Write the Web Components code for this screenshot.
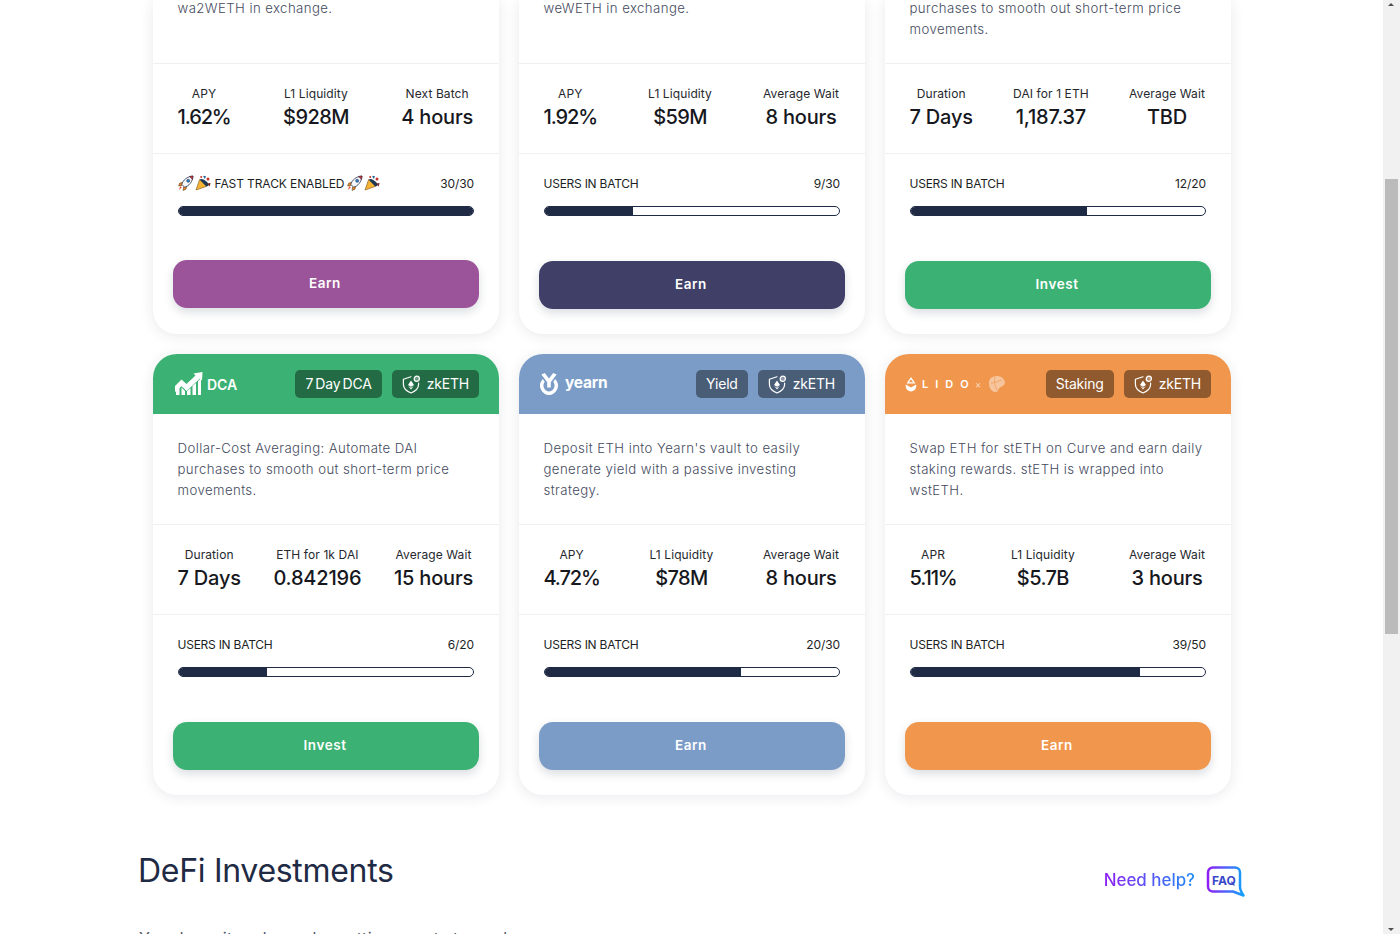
<!DOCTYPE html>
<html lang="en">
<head>
<meta charset="utf-8">
<title>Investments</title>
<style>
  html, body { margin: 0; padding: 0; height: 100%; overflow: hidden; background: #fff; }
  body { font-family: Inter, "Liberation Sans", sans-serif; }
  page-shell { height: 100vh; }
</style>
</head>
<body>
<page-shell>
  <card-grid>
    <invest-card cropped color="#9b5499" label-a="APY" value-a="1.62%" label-b="L1 Liquidity" value-b="$928M" label-c="Next Batch" value-c="4 hours" batch="FAST" count="30/30" percent="100" action="Earn" lift="1">
      wa2WETH in exchange.
    </invest-card>
    <invest-card cropped color="#3f3f67" label-a="APY" value-a="1.92%" label-b="L1 Liquidity" value-b="$59M" label-c="Average Wait" value-c="8 hours" count="9/30" percent="30" action="Earn">
      weWETH in exchange.
    </invest-card>
    <invest-card cropped color="#3bb273" label-a="Duration" value-a="7 Days" label-b="DAI for 1 ETH" value-b="1,187.37" label-c="Average Wait" value-c="TBD" count="12/20" percent="60" action="Invest">
      purchases to smooth out short-term price movements.
    </invest-card>

    <invest-card color="#3bb273" tag="7 Day DCA" label-a="Duration" value-a="7 Days" label-b="ETH for 1k DAI" value-b="0.842196" label-c="Average Wait" value-c="15 hours" count="6/20" percent="30" action="Invest">
      <brand-logo slot="logo" kind="dca"></brand-logo>
      Dollar-Cost Averaging: Automate DAI purchases to smooth out short-term price movements.
    </invest-card>
    <invest-card color="#7b9cc7" tag="Yield" label-a="APY" value-a="4.72%" label-b="L1 Liquidity" value-b="$78M" label-c="Average Wait" value-c="8 hours" count="20/30" percent="66.6" action="Earn">
      <brand-logo slot="logo" kind="yearn"></brand-logo>
      Deposit ETH into Yearn's vault to easily generate yield with a passive investing strategy.
    </invest-card>
    <invest-card color="#f0964d" tag="Staking" label-a="APR" value-a="5.11%" label-b="L1 Liquidity" value-b="$5.7B" label-c="Average Wait" value-c="3 hours" count="39/50" percent="78" action="Earn">
      <brand-logo slot="logo" kind="lido"></brand-logo>
      Swap ETH for stETH on Curve and earn daily staking rewards. stETH is wrapped into<br>wstETH.
    </invest-card>
  </card-grid>
  <section-head title="DeFi Investments"></section-head>
  <section-intro>You deposit and earn by putting assets to work</section-intro>
</page-shell>
<fake-scrollbar></fake-scrollbar>

<script>
// little svg bits that more than one element needs
const SHIELD = `<svg width="19" height="19" viewBox="0 0 19 19" fill="none">
  <path d="M9 1.800 1.400 4.300v5c0 4 3 6.900 7.600 8.700 4.600-1.800 7.600-4.700 7.600-8.700V8" stroke="#fff" stroke-width="1.200" stroke-linejoin="round" stroke-linecap="round"/>
  <path d="M9 5.400 6 10l3 1.700 3-1.700z" fill="#fff"/>
  <path d="M6.300 11.100 9 14.600l2.700-3.500L9 12.700z" fill="#fff"/>
  <circle cx="14.800" cy="3.800" r="2.600" fill="#fff" fill-opacity=".35" stroke="#fff" stroke-width="1.200"/>
</svg>`;

const ROCKET = `<svg width="16" height="16" viewBox="0 0 16 16">
  <path d="M5.200 7.200 1.800 8 .6 11l3.400-.6zM8.800 10.800 8 14.200l-3 1.200.6-3.400z" fill="#f08a24" stroke="#4a2c12" stroke-width=".5"/>
  <path d="M3.800 9.400C5 5 9 1.600 15 1c-.5 6-4 10-8.400 11.200z" fill="#f4f7fb" stroke="#2c3144" stroke-width=".8"/>
  <path d="M11.400 1.500 15 1l-.5 3.600z" fill="#d8262c" stroke="#2c3144" stroke-width=".5"/>
  <circle cx="10.200" cy="5.800" r="1.500" fill="#2d86d9" stroke="#2c3144" stroke-width=".6"/>
  <path d="M3.800 12.200 1 15l1.200-3.800z" fill="#e9452a"/>
</svg>`;

const POPPER = `<svg width="16" height="16" viewBox="0 0 16 16">
  <path d="M1 15 4.600 4.600l6.800 6.800z" fill="#f6b437" stroke="#7c4f10" stroke-width=".6"/>
  <path d="M4.600 4.600 11.400 11.400C14 11.400 14 9 12 7 10 4.800 6.400 2.800 4.600 4.600z" fill="#1e3a52"/>
  <path d="M8 .8 11 1.200 9.800 4z" fill="#1d5f8a"/>
  <circle cx="13" cy="4" r="1.500" fill="#c8322a"/>
  <path d="M11.800 8.600 15.600 8 14.600 11.400z" fill="#6e2a24"/>
  <circle cx="6.200" cy="2" r="1" fill="#c8322a"/>
</svg>`;

class PageShell extends HTMLElement {
    constructor() {
        super();
        this.attachShadow({ mode: 'open' }).innerHTML = `
        <style>
            :host {
                display: block;
                overflow: hidden;
                padding: 0 17px 0 0;
                box-sizing: border-box;
                font-family: Inter, "Liberation Sans", sans-serif;
            }
            .inner {
                width: 1106px;
                margin-left: 139px;
            }
        </style>
        <div class="inner"><slot></slot></div>
        `;
    }
}

class CardGrid extends HTMLElement {
    constructor() {
        super();
        this.attachShadow({ mode: 'open' }).innerHTML = `
        <style>
            :host {
                display: grid;
                grid-template-columns: repeat(3, 346px);
                gap: 20px;
                padding: 0 14px;
            }
        </style>
        <slot></slot>
        `;
    }
}

class InvestCard extends HTMLElement {
    constructor() {
        super();
        this.attachShadow({ mode: 'open' });
    }

    connectedCallback() {
        const a = n => this.getAttribute(n) || '';
        const cropped = this.hasAttribute('cropped');
        const batch = a('batch') === 'FAST'
            ? `${ROCKET}${POPPER}<span class="fast">FAST TRACK ENABLED</span>${ROCKET}${POPPER}`
            : '<span class="users">USERS IN BATCH</span>';
        // the % and $ glyphs run wider here than in the real font
        const value = v => {
            const tight = v.includes('%') ? -1.1 : v.startsWith('$') ? -0.6 : -0.2;
            return `<b style="letter-spacing:${tight}px">${v}</b>`;
        };

        this.shadowRoot.innerHTML = `
        <style>
            :host {
                display: flex;
                flex-direction: column;
                background: #fff;
                border-radius: 0 0 24px 24px;
                box-shadow: 0 2px 14px rgba(31, 42, 68, 0.1);
                --accent: ${a('color')};
            }
            :host(:not([cropped])) { border-radius: 24px; }
            .head {
                height: 60px;
                display: flex;
                align-items: center;
                padding: 0 20px 0 22px;
                gap: 10px;
                background: var(--accent);
                border-radius: 24px 24px 0 0;
            }
            .logo { flex: 1; display: flex; }
            .tag {
                height: 28px;
                box-sizing: border-box;
                padding: 0 10px 2px;
                display: flex;
                align-items: center;
                gap: 6px;
                border-radius: 5px;
                background: rgba(0, 0, 0, 0.4);
                color: #fff;
                font-size: 14px;
                letter-spacing: -0.2px;
                word-spacing: -1.5px;
                white-space: nowrap;
            }
            .tag svg { display: block; margin-top: 2px; }
            .desc {
                height: 110px;
                box-sizing: border-box;
                padding: 24px 20px 0 24.500px;
                font-size: 13.200px;
                line-height: 21px;
                letter-spacing: 0.42px;
                color: #454b60;
                font-weight: 300;
            }
            :host([cropped]) .desc {
                height: 65px;
                padding-top: 0;
                margin-top: -2px;
            }
            .stats {
                height: 91px;
                box-sizing: border-box;
                border-top: 1px solid #eef0f2;
                border-bottom: 1px solid #eef0f2;
                padding: 22px 26px 0 24.500px;
                display: flex;
                justify-content: space-between;
                text-align: center;
                color: #16181d;
            }
            .stats span { display: block; font-size: 12px; line-height: 15px; letter-spacing: 0.1px; color: #26282e; white-space: nowrap; }
            .stats b { display: block; font-size: 20px; line-height: 24px; margin-top: 4px; font-weight: 500; white-space: nowrap; }
            .batch {
                padding: 21px 25px 0 24.500px;
                display: flex;
                justify-content: space-between;
                align-items: center;
                height: 16px;
                font-size: 12px;
                color: #1d1f25;
                letter-spacing: -0.1px;
            }
            .batch .left { display: flex; align-items: center; gap: 1px; }
            .batch .left .fast { margin: 0 2px 0 3px; }
            .batch .left .users { letter-spacing: -0.25px; }
            .bar {
                height: 10px;
                box-sizing: border-box;
                margin: 15px 25px 0;
                border: 1px solid #1f2a44;
                border-radius: 5px;
                background: #fff;
                overflow: hidden;
            }
            .fill { height: 100%; background: #1f2a44; width: ${a('percent')}%; }
            .action {
                height: 48px;
                margin: ${a('lift') ? 44 : 45}px 20px ${a('lift') ? 26 : 25}px;
                border: none;
                border-radius: 14px;
                background: var(--accent);
                color: #fff;
                font: 600 13.500px Inter, "Liberation Sans", sans-serif;
                letter-spacing: 0.55px;
                box-shadow: 0 4px 10px rgba(31, 42, 68, 0.16);
                padding: 0 2px 2px 0;
            }
        </style>
        ${cropped ? '' : `<div class="head">
            <div class="logo"><slot name="logo"></slot></div>
            <div class="tag">${a('tag')}</div>
            <div class="tag zk">${SHIELD}<span>zkETH</span></div>
        </div>`}
        <div class="desc"><slot></slot></div>
        <div class="stats">
            <div><span>${a('label-a')}</span>${value(a('value-a'))}</div>
            <div><span>${a('label-b')}</span>${value(a('value-b'))}</div>
            <div><span>${a('label-c')}</span>${value(a('value-c'))}</div>
        </div>
        <div class="batch"><div class="left">${batch}</div><div>${a('count')}</div></div>
        <div class="bar"><div class="fill"></div></div>
        <button class="action">${a('action')}</button>
        `;
    }
}

class BrandLogo extends HTMLElement {
    constructor() {
        super();
        this.attachShadow({ mode: 'open' });
    }

    connectedCallback() {
        const kind = this.getAttribute('kind');
        const marks = {
            dca: `<svg width="28" height="24" viewBox="0 0 28 24" fill="#fff">
                <path d="M0 14 6.500 7.500l5 4.500 9-8.500-2-2L27.500 0 27 8.500 25 6.500 11.600 19 6.500 14.200 0 20z" />
                <path d="M1 17.500 4.500 14v9H1zM6.500 15.500l3.500 3.500v4H6.500zM12 19l3.500-3v7H12zM17.500 14l3.500-3v12h-3.500zM23 9l3-2.500V23h-3z"/>
            </svg><span class="dca">DCA</span>`,
            yearn: `<svg class="ymark" width="20" height="22" viewBox="0 0 20 22" fill="#fff">
                <path d="M2.400 1.500 5.800 0 10 5.600 14.200 0l3.400 1.500-5.800 7.700V14.500H8.200V9.200z"/>
                <path d="M3.800 6C.8 9 .2 13 1.800 16.200 3.600 19.800 6.600 22 10 22s6.400-2.200 8.200-5.800C19.800 13 19.200 9 16.200 6l-1.900 2.700c1.400 1.800 1.600 4.300.7 6.200-1 2-2.900 3.600-5 3.600s-4-1.600-5-3.600c-.9-1.900-.7-4.400.7-6.200z"/>
            </svg><span class="yearn">yearn</span>`,
            lido: `<svg class="lmark" width="12" height="15" viewBox="0 0 12 15" fill="#fff">
                <path d="M6 0 9.300 4.700a5.300 5.300 0 0 1 1.100 1.900H1.600A5.300 5.300 0 0 1 2.700 4.700zM6 2.200 4 5.300h4z" fill-rule="evenodd"/>
                <path d="M.8 7.600 6 10.600l5.200-3c.7 3.800-1.800 6.900-5.200 6.900S.1 11.400.8 7.600z"/>
            </svg><span class="lido">LIDO</span><span class="x">×</span>
            <svg width="18" height="18" viewBox="0 0 18 18">
                <path d="M2 4C5 .8 9 .5 12 1.500c2 .7 4.500 3 5 5.500.3 1.800-1.500 3.800-4 5-2 1-3 2.500-3.500 4.500-2.500 1-5.500 0-7-2.500C.500 11 .500 6.500 2 4z" fill="#fff" opacity=".45"/>
                <path d="M7 2C6 6 6.500 11 9 15M3 8.500 14 5" stroke="#f0964d" stroke-width=".9" fill="none" opacity=".7"/>
            </svg>`
        };
        this.shadowRoot.innerHTML = `
        <style>
            :host { display: block; }
            div { display: flex; align-items: center; color: #fff; font-family: Inter, "Liberation Sans", sans-serif; }
            .dca { font-size: 14px; font-weight: 600; margin-left: 4px; margin-top: 1px; }
            .ymark { margin-left: -2px; }
            .yearn { font-size: 15.500px; font-weight: 700; margin-left: 6px; margin-top: -4px; letter-spacing: -0.2px; }
            .lmark { margin-left: -2px; }
            .lido { font-size: 11px; font-weight: 600; letter-spacing: 7px; margin-left: 5px; }
            .x { font-size: 10px; opacity: .6; margin: 0 7px 0 -1px; }
        </style>
        <div>${marks[kind]}</div>
        `;
    }
}

class SectionHead extends HTMLElement {
    constructor() {
        super();
        this.attachShadow({ mode: 'open' }).innerHTML = `
        <style>
            :host {
                display: flex;
                justify-content: space-between;
                align-items: flex-start;
                margin-top: 52px;
            }
            h2 {
                margin: 0 0 0 -1px;
                font-size: 32px;
                line-height: 48px;
                font-weight: 400;
                letter-spacing: -0.3px;
                color: #1f2a44;
            }
            .help {
                display: flex;
                align-items: center;
                gap: 11px;
                margin-top: 19px;
            }
            .help span {
                margin-bottom: 5px;
                font-size: 16.900px;
                font-weight: 500;
                color: transparent;
                background: linear-gradient(90deg, #8f1ff5, #1d8cf8);
                -webkit-background-clip: text;
                background-clip: text;
            }
            .bubble {
                position: relative;
                width: 39px;
                height: 32px;
            }
            .bubble svg { position: absolute; inset: 0; }
            .bubble b {
                position: absolute;
                left: 6px;
                top: 8px;
                font-size: 12px;
                line-height: 14px;
                font-weight: 700;
                color: #3948c9;
            }
        </style>
        <h2>${this.getAttribute('title')}</h2>
        <div class="help">
            <span>Need help?</span>
            <div class="bubble">
                <svg width="39" height="32" viewBox="0 0 39 32" fill="none">
                    <defs><linearGradient id="g" x1="0" y1="0" x2="1" y2="0">
                        <stop offset="0" stop-color="#8f1ff5"/><stop offset="1" stop-color="#11a3fb"/>
                    </linearGradient></defs>
                    <path d="M7 1.500H29a5 5 0 0 1 5 5V21c0 2.500 1.500 5.500 3.500 8.500L27 25.500H7a5 5 0 0 1-5-5V6.500a5 5 0 0 1 5-5z" stroke="url(#g)" stroke-width="2.500" stroke-linejoin="round"/>
                </svg>
                <b>FAQ</b>
            </div>
        </div>
        `;
    }
}

class SectionIntro extends HTMLElement {
    constructor() {
        super();
        this.attachShadow({ mode: 'open' }).innerHTML = `
        <style>
            :host {
                display: block;
                margin-top: 28px;
                font-size: 16px;
                line-height: 24px;
                color: #4c5266;
                letter-spacing: 0.4px;
            }
        </style>
        <slot></slot>
        `;
    }
}

class FakeScrollbar extends HTMLElement {
    constructor() {
        super();
        this.attachShadow({ mode: 'open' }).innerHTML = `
        <style>
            :host {
                position: fixed;
                top: 0;
                right: 0;
                bottom: 0;
                width: 17px;
                background: #f1f1f1;
            }
            .thumb {
                position: absolute;
                top: 179px;
                left: 2px;
                width: 13px;
                height: 455px;
                background: #bbb;
            }
            .up, .down {
                position: absolute;
                left: 5px;
                width: 0;
                height: 0;
                border-left: 3.500px solid transparent;
                border-right: 3.500px solid transparent;
            }
            .up { top: 3px; border-bottom: 3px solid #505050; }
            .down { bottom: 3px; border-top: 3px solid #505050; }
        </style>
        <div class="up"></div>
        <div class="thumb"></div>
        <div class="down"></div>
        `;
    }
}

customElements.define('page-shell', PageShell);
customElements.define('card-grid', CardGrid);
customElements.define('invest-card', InvestCard);
customElements.define('brand-logo', BrandLogo);
customElements.define('section-head', SectionHead);
customElements.define('section-intro', SectionIntro);
customElements.define('fake-scrollbar', FakeScrollbar);
</script>
</body>
</html>
